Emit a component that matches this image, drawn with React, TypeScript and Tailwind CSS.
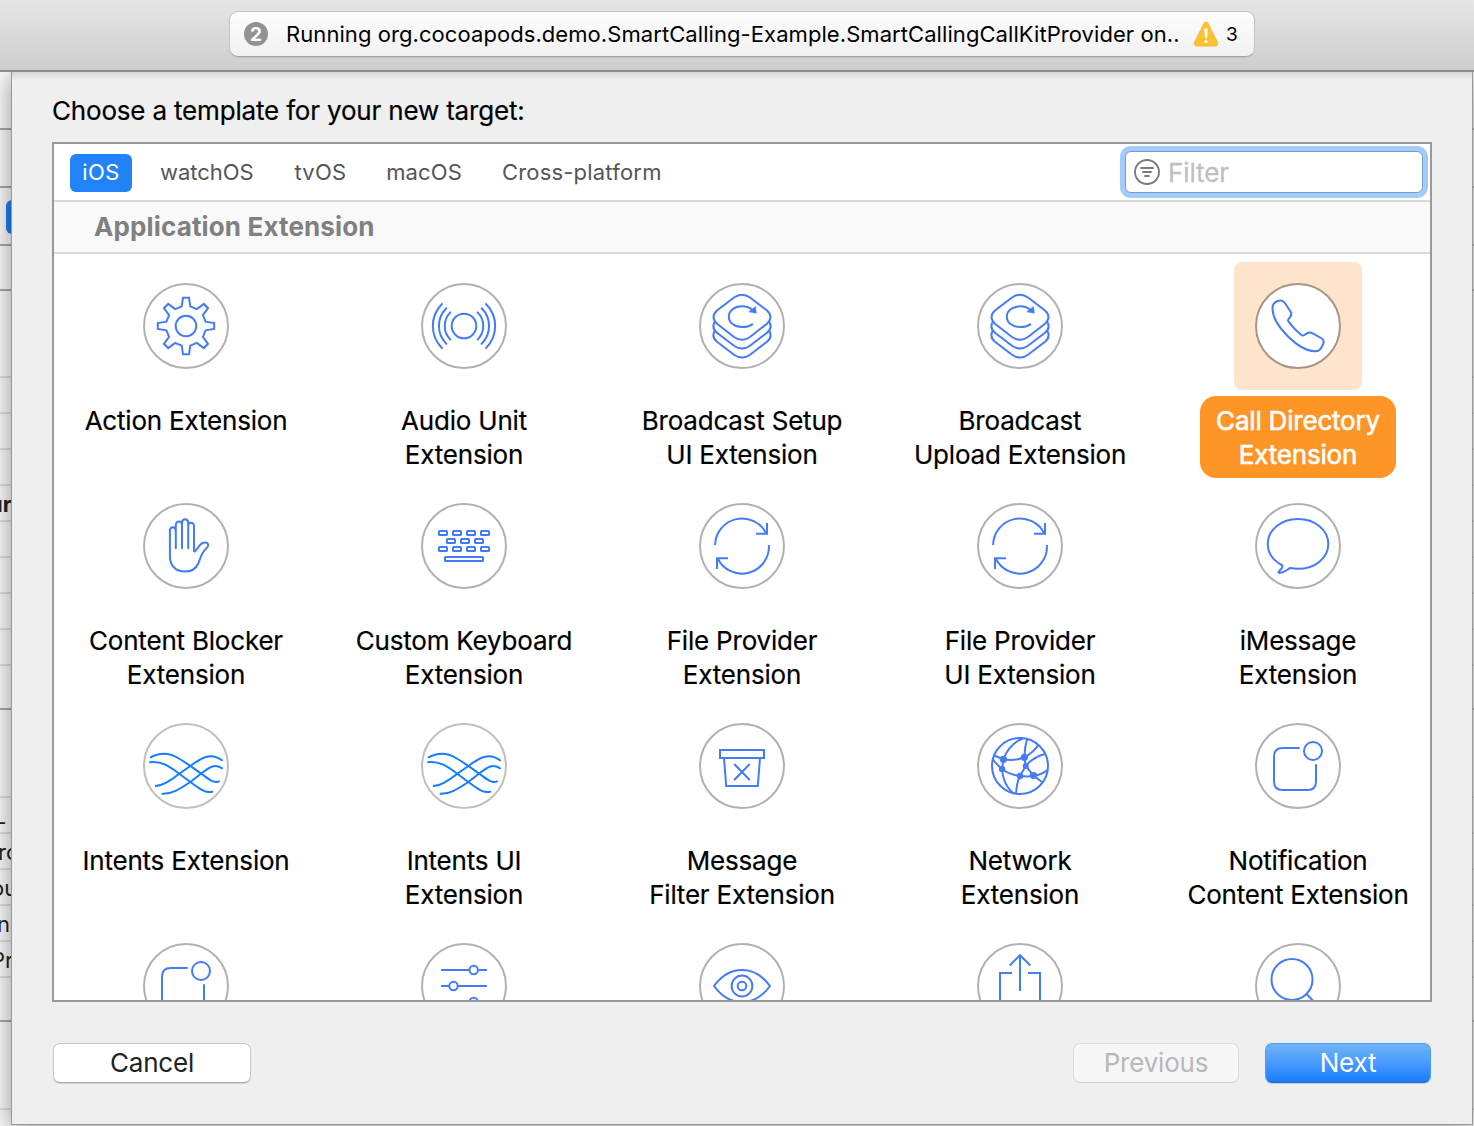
import React from "react";

const BLUE = "#447cf4";

/* ---------- Template icons, drawn around a 0,0 origin ---------- */

const tooth: [number, number][] = [
  [-4.3, -19.6],
  [-3, -28.2],
  [3, -28.2],
  [4.3, -19.6],
];
const gearPoints = Array.from({ length: 8 }, (_, i) => {
  const a = (i * Math.PI) / 4;
  return tooth
    .map(([x, y]) => `${(x * Math.cos(a) - y * Math.sin(a)).toFixed(2)},${(x * Math.sin(a) + y * Math.cos(a)).toFixed(2)}`)
    .join(" ");
}).join(" ");

const Gear = () => (
  <>
    <polygon points={gearPoints} />
    <circle r="10.3" />
  </>
);

const AudioUnit = () => (
  <g strokeLinecap="round">
    <circle r="12.3" />
    <path d="M-22 -22A31 31 0 0 0 -22 22M-17.7 -17.7A25 25 0 0 0 -17.7 17.7M-13.6 -13.6A19.2 19.2 0 0 0 -13.6 13.6" />
    <path d="M22 -22A31 31 0 0 1 22 22M17.7 -17.7A25 25 0 0 1 17.7 17.7M13.6 -13.6A19.2 19.2 0 0 1 13.6 13.6" />
  </g>
);

const Broadcast = () => (
  <>
    <path d="M-8 -28.5Q0 -34.2 8 -28.5L25 -15.5Q32 -9 25 -2.3L8 11Q0 16.6 -8 11L-25 -2.3Q-32 -9 -25 -15.5Z" />
    <path d="M-27 -4.7Q-31 2 -25 6.7L-8 19.8Q0 25.4 8 19.8L25 6.7Q31 2 27 -4.7" />
    <path d="M-27 4.3Q-31 11 -25 15.7L-8 28.8Q0 34.4 8 28.8L25 15.7Q31 11 27 4.3" />
    <path strokeLinecap="round" d="M10.3 -1.700C7.500 .2 4 1 0 1C-7.500 1 -13.200 -3.500 -13.200 -9.300C-13.200 -15.200 -7.500 -19.700 0 -19.700C4 -19.700 7.500 -18.500 10 -16.500" />
    <path d="M13.500 -19.500L14.300 -12.800L6.800 -14.200Z" fill={BLUE} stroke={BLUE} strokeWidth=".6" />
  </>
);

const Phone = () => (
  <path d="M-25.500 -17.500C-25.700 -21.500 -24 -23.500 -20.500 -25C-17 -26.300 -15 -25.800 -13.300 -23.300L-7.500 -14.500C-6.300 -12.500 -6.400 -10.700 -7.700 -9.200L-9.700 -6.700C-10.300 -5.700 -10.200 -5.200 -9.500 -4.300C-6 0.500 -1.500 5 3 8.700C4.300 9.800 5.500 9.900 6.800 8.800C9.300 6.700 11.500 5.800 14.200 7.100L23 12C25.500 13.500 26.300 15.300 25.200 17.800C23 23.300 21 25.500 16.500 25.300C1 24.800 -25.200 0 -25.500 -17.500Z" />
);

const Hand = () => (
  <path
    strokeLinecap="round"
    strokeLinejoin="round"
    d="M-10.200 2.300V-15C-10.200 -20 -16.100 -20 -16.100 -15V9.700C-16.100 20 -10 25.600 -1 25.600C6.500 25.600 10 22.500 12.300 17.500C14.500 11.500 15.300 8.500 18 5C20.500 2 22.600 .5 22.200 -1.200C21.500 -4.300 17 -4 14.500 -1.500C12 1 10.500 4 9 5.300C8.300 5.700 8 5.300 8 4.500V-20C8 -24.600 2.200 -24.200 2.200 -20V2.300M2.200 -18V-23.300C2.200 -28 -4 -28 -4 -23.300V2.300M-4 -20C-4 -26 -10.200 -26 -10.200 -20V-14"
  />
);

const keys: [number, number][] = [
  [-25, -15], [-11, -15], [3, -15], [17, -15],
  [-17, -7], [-3, -7], [11, -7],
  [-25, 1], [-11, 1], [3, 1], [17, 1],
];

const Keyboard = () => (
  <>
    {keys.map(([x, y]) => (
      <rect key={`${x},${y}`} x={x} y={y} width="8" height="4" rx=".6" />
    ))}
    <rect x="-19" y="11" width="38" height="4" rx=".6" />
  </>
);

const Sync = () => (
  <>
    <path d="M-26.900 -1A27 27 0 0 1 24.300 -12.500M25 -23V-12.300H14" />
    <path d="M26.900 -1A27 27 0 0 1 -24.300 12.500M-25 23V12.300H-14" />
  </>
);

const Bubble = () => (
  <path
    strokeLinejoin="round"
    d="M-15.500 19.500C-24 15 -30.200 7.500 -30.200 -2C-30.200 -16 -17 -27 0 -27C17 -27 30.300 -16 30.300 -2C30.300 12 17 22.800 0 22.800C-3 22.800 -5.500 22.500 -8 22C-11 23.500 -13 26.500 -18.500 27C-19.800 27 -19.800 26 -19 25.200C-17 23.300 -15 21 -15.500 19.500Z"
  />
);

const Intents = () => (
  <g stroke="#167dfb">
    <path d="M-36 -8.300C-26 -14 -17 -13.500 -8 -8C0 -3.500 8 2.500 15 7.500C22 12.500 28 18.500 33.700 15" />
    <path d="M-36.700 -3.700C-24 -5.500 -16 1 -6.700 7.700L4.300 16C12 21.500 20 28.500 27 25.300" />
    <path d="M-31 20C-23 20 -14 13.500 -6.700 7.700L4.300 0C14 -7 24 -15 36.700 -5.200" />
    <path d="M-24.300 27.800C-15 28.500 -6 23 4.300 16L15 7.700C23 1.500 29 -3.500 36.700 2.700" />
  </g>
);

const FilterBox = () => (
  <>
    <rect x="-22" y="-16" width="44" height="8" />
    <path d="M-18 -8L-15.800 20H15.800L18 -8" />
    <path strokeLinecap="round" d="M-7.300 -1.500L7.300 13.500M7.300 -1.500L-7.300 13.500" />
  </>
);

const Network = () => (
  <>
    <circle r="28" />
    <path d="M-16.600 -6.700Q-11 -22 2.700 -27.500M4.400 -8.700Q4.500 -18 7 -26.700M4.400 -8.700Q14 -14 18.700 -21.500M4.400 -8.700Q-6 -4.500 -16.600 -6.700L-26 -10.500M-27 -6.500Q-23 -1 -18 3Q-10 9 0 10M-16.600 -6.700L-18 3Q-17 18 -7.400 26.700M4.400 -8.700L5.700 0L0 10Q-3.500 17 -4 27.500M5.700 0Q13 -9 25 -12M5.700 0L13.300 9.300L22.500 16.500M0 10Q18 12 27.500 4" />
    <g fill={BLUE} stroke="none">
      <circle cx="-16.600" cy="-6.700" r="3.600" />
      <circle cx="4.400" cy="-8.700" r="3.600" />
      <circle cx="-18" cy="3" r="3.200" />
      <circle cx="5.700" cy="0" r="3" />
      <circle cx="0" cy="10" r="3.200" />
      <circle cx="13.500" cy="9.500" r="3.600" />
    </g>
  </>
);

const Notification = () => (
  <>
    <path strokeLinecap="round" d="M1 -18H-15.500Q-24 -18 -24 -9.500V15.500Q-24 24 -15.500 24H9.500Q18 24 18 15.500V-1" />
    <circle cx="15" cy="-15" r="9" />
  </>
);

const Sliders = () => (
  <>
    <path d="M-23 -16H5.200M14.200 -16H23M-23 0H-15M-6 0H23M-23 16H5.200M14.200 16H23" />
    <circle cx="9.700" cy="-16" r="4.200" />
    <circle cx="-10.500" cy="0" r="4.200" />
    <circle cx="9.700" cy="16" r="4.200" />
  </>
);

const Eye = () => (
  <>
    <path strokeLinejoin="round" d="M-28 0C-20 -11 -11 -16 0 -16C11 -16 20 -11 28 0C20 11 11 16 0 16C-11 16 -20 11 -28 0Z" />
    <circle r="10.400" />
    <circle r="4.300" />
  </>
);

const Share = () => (
  <path d="M0 5V-30M-10.300 -20.500L0 -30.800L10.300 -20.500M-8 -13H-20V26H20V-13H8" />
);

const Search = () => (
  <>
    <circle cx="-6" cy="-6.500" r="20.500" />
    <path d="M8.500 8L27 27" />
  </>
);

type Template = { label: string[]; Icon: () => React.JSX.Element; selected?: boolean };

const templates: Template[] = [
  { label: ["Action Extension"], Icon: Gear },
  { label: ["Audio Unit", "Extension"], Icon: AudioUnit },
  { label: ["Broadcast Setup", "UI Extension"], Icon: Broadcast },
  { label: ["Broadcast", "Upload Extension"], Icon: Broadcast },
  { label: ["Call Directory", "Extension"], Icon: Phone, selected: true },
  { label: ["Content Blocker", "Extension"], Icon: Hand },
  { label: ["Custom Keyboard", "Extension"], Icon: Keyboard },
  { label: ["File Provider", "Extension"], Icon: Sync },
  { label: ["File Provider", "UI Extension"], Icon: Sync },
  { label: ["iMessage", "Extension"], Icon: Bubble },
  { label: ["Intents Extension"], Icon: Intents },
  { label: ["Intents UI", "Extension"], Icon: Intents },
  { label: ["Message", "Filter Extension"], Icon: FilterBox },
  { label: ["Network", "Extension"], Icon: Network },
  { label: ["Notification", "Content Extension"], Icon: Notification },
  { label: [], Icon: Notification },
  { label: [], Icon: Sliders },
  { label: [], Icon: Eye },
  { label: [], Icon: Share },
  { label: [], Icon: Search },
];

function TemplateItem({ label, Icon, selected }: Template) {
  const ring = selected ? "#a89585" : Icon === Intents ? "#c0c0c0" : "#b1b1b1";
  return (
    <div className="flex h-[220px] flex-col items-center pt-2">
      <div className={`flex size-32 shrink-0 items-center justify-center rounded-lg ${selected ? "bg-[#fee4ca]" : ""}`}>
        <svg width="88" height="88" viewBox="-44 -44 88 88" fill="none" stroke={BLUE} strokeWidth="2">
          <circle r="42" fill="#fff" stroke={ring} />
          <Icon />
        </svg>
      </div>
      {label.length > 0 && (
        <div
          className={`mt-1.5 shrink-0 rounded-[16px] px-4 pt-2 pb-1.5 text-center text-[26px] leading-[34px] tracking-[-0.2px] whitespace-nowrap ${
            selected
              ? "bg-[#fe9527] text-white [-webkit-text-stroke:0.6px_white]"
              : "text-black [-webkit-text-stroke:0.2px_black]"
          }`}
        >
          {label.map((line) => (
            <div key={line}>{line}</div>
          ))}
        </div>
      )}
    </div>
  );
}

/* ---------- Editor rows that peek out beside the sheet ---------- */

type Row = { cls: string; text?: string; textCls?: string };

const rows: Row[] = [
  { cls: "h-[58px] border-[#a6a6a6]" },
  { cls: "h-[58px] border-[#a6a6a6]" },
  { cls: "h-[58px] border-[#a6a6a6]" },
  { cls: "h-[45px] border-[#a6a6a6]" },
  { cls: "h-[87px] border-[#dedede]" },
  { cls: "h-9 border-[#dedede]" },
  { cls: "h-9 border-[#dedede]" },
  { cls: "h-9 border-[#dedede]" },
  { cls: "h-9 border-[#dedede]", text: "ur", textCls: "-ml-[11px] pt-[7px] font-bold" },
  { cls: "h-9 border-[#dedede]" },
  { cls: "h-9 border-[#dedede]" },
  { cls: "h-9 border-[#dedede]" },
  { cls: "h-9 border-[#dedede]" },
  { cls: "h-11 border-[#a6a6a6]" },
  { cls: "h-[88px] border-[#dedede]" },
  { cls: "h-9 border-[#dedede]", text: "–", textCls: "-ml-[6px] pt-[13px]" },
  { cls: "h-9 border-[#dedede]", text: "ro", textCls: "-ml-[2px] pt-[7px]" },
  { cls: "h-9 border-[#dedede]", text: "ou", textCls: "-ml-[9px] pt-[7px]" },
  { cls: "h-9 border-[#dedede]", text: "n’", textCls: "-ml-[3px] pt-[7px]" },
  { cls: "h-9 border-[#dedede]", text: "Pr", textCls: "-ml-[9px] pt-[7px]" },
  { cls: "h-11 border-[#a6a6a6]" },
  { cls: "h-[88px] border-[#dedede]" },
];

function RowStrip({ withText }: { withText?: boolean }) {
  return (
    <div className="flex flex-col">
      {rows.map((r, i) => (
        <div key={i} className={`flex shrink-0 overflow-hidden border-b-2 ${r.cls}`}>
          {withText && i === 2 && <div className="mt-3 ml-1.5 h-[34px] w-8 shrink-0 rounded-md bg-[#1f7ff0]" />}
          {withText && r.text && (
            <span className={`text-[22px] leading-[22px] whitespace-nowrap text-[#222] ${r.textCls}`}>{r.text}</span>
          )}
        </div>
      ))}
    </div>
  );
}

function Toolbar() {
  return (
    <header className="flex h-[72px] shrink-0 items-start justify-center border-b-2 border-[#8c8c8c] bg-gradient-to-b from-[#e6e6e6] to-[#cdcdcd] pt-[11px]">
      <div className="ml-[10px] flex h-[46px] w-[1026px] items-center rounded-[9px] border border-[#c4c4c4] border-b-[#a3a3a3] bg-gradient-to-b from-[#fdfdfd] to-[#f1f1f1] shadow-[0_1px_1px_rgba(0,0,0,0.08)]">
        <span className="ml-[14px] flex size-6 items-center justify-center rounded-full bg-[#929292] text-[19px] leading-none font-bold text-white">
          2
        </span>
        <span className="ml-[18px] w-[895px] text-[22px] tracking-[0.07px] whitespace-nowrap text-black">
          Running org.cocoapods.demo.SmartCalling-Example.SmartCallingCallKitProvider on..
        </span>
        <svg className="ml-3" width="26" height="26" viewBox="0 0 26 26">
          <path d="M11 2.300Q13 -.6 15 2.300L24.600 21.500Q25.500 24.900 22.500 25H3.500Q.5 24.900 1.400 21.500Z" fill="#ffc131" stroke="#f7b32c" strokeWidth=".8" />
          <path d="M11.300 8.500Q11.300 7.200 13 7.200Q14.700 7.200 14.700 8.500L14.100 16.500Q13.900 17.400 13 17.400Q12.100 17.400 11.900 16.500Z" fill="#fff" />
          <circle cx="13" cy="20.500" r="1.600" fill="#fff" />
        </svg>
        <span className="ml-[7px] text-[19px] leading-none text-black">3</span>
      </div>
    </header>
  );
}

const platforms = [
  { name: "watchOS", cls: "ml-7 tracking-[-0.05px]" },
  { name: "tvOS", cls: "ml-[41px] tracking-[0.2px]" },
  { name: "macOS", cls: "ml-[40px] tracking-[0.1px]" },
  { name: "Cross-platform", cls: "ml-[40px] tracking-[0.2px]" },
];

function PlatformBar() {
  return (
    <div className="flex h-[58px] shrink-0 items-center border-b-2 border-[#d9d9d9] bg-white pr-[7px] pl-4 text-[22px] text-[#555]">
      <span className="mt-[2px] flex h-[38px] w-[62px] items-center justify-center rounded-md bg-[#2283f8] pb-[2px] tracking-[0.4px] text-white">
        iOS
      </span>
      {platforms.map((p) => (
        <span key={p.name} className={p.cls}>
          {p.name}
        </span>
      ))}
      <div className="ml-auto flex h-[42px] w-[298px] items-center rounded-md border border-[#7a9cc4] bg-white pl-2 shadow-[0_0_0_5px_#a0cbfb]">
        <svg width="26" height="26" viewBox="0 0 26 26" fill="none" stroke="#7b7b7b" strokeWidth="1.900">
          <circle cx="13" cy="13" r="12" />
          <path strokeLinecap="round" d="M7 9H19M9 13H17M11 17H15" />
        </svg>
        <span className="ml-2 text-[26px] tracking-[-0.1px] text-[#bfbfbf] [-webkit-text-stroke:0.3px_#bfbfbf]">Filter</span>
      </div>
    </div>
  );
}

function Sheet() {
  return (
    <section className="flex h-[1053px] flex-col border-r border-b border-l border-[#999] bg-[#efefef] px-[40px] shadow-[0_4px_24px_rgba(0,0,0,0.42)]">
      <div className="-mx-[40px] h-2 shrink-0 bg-gradient-to-b from-[#d6d6d6] to-[#efefef]" />
      <h1 className="mt-3 h-[50px] shrink-0 text-[26px] leading-[38px] tracking-[-0.18px] text-black [-webkit-text-stroke:0.2px_black]">
        Choose a template for your new target:
      </h1>
      <div className="flex h-[860px] w-[1380px] shrink-0 flex-col overflow-hidden border-2 border-[#999] bg-white">
        <PlatformBar />
        <h2 className="h-[52px] shrink-0 border-b-2 border-[#d9d9d9] bg-[#f9f9f9] pl-10 text-[26px] leading-[50px] font-bold tracking-[0.14px] text-[#808080]">
          Application Extension
        </h2>
        <div className="-ml-[7px] grid w-[1390px] grid-cols-5">
          {templates.map((t, i) => (
            <TemplateItem key={i} {...t} />
          ))}
        </div>
      </div>
      <div className="mt-[41px] flex w-[1379px] shrink-0 items-center pl-px text-[26px] tracking-[-0.2px]">
        <button className="h-10 w-[198px] rounded-[7px] border border-[#c9c9c9] border-b-[#acacac] bg-white leading-[38px] text-[#222] shadow-[0_1px_1px_rgba(0,0,0,0.12)]">
          Cancel
        </button>
        <button className="ml-auto h-10 w-[166px] rounded-[7px] border border-[#dadada] border-b-[#cdcdcd] bg-[#f6f6f6] leading-[38px] text-[#b8b8b8]">
          Previous
        </button>
        <button className="ml-[26px] h-10 w-[166px] rounded-[7px] border border-[#4fa0f5] border-b-[#1170ee] bg-gradient-to-b from-[#6fb5f9] to-[#167dfd] leading-[38px] text-white shadow-[0_1px_1px_rgba(0,0,0,0.15)]">
          Next
        </button>
      </div>
    </section>
  );
}

export default function App() {
  return (
    <div className="flex h-[1126px] w-[1474px] flex-col overflow-hidden bg-white font-['Inter',sans-serif]">
      <Toolbar />
      <main className="grid h-[1054px] grid-cols-[11px_1462px_1px] overflow-hidden bg-[#fafafa]">
        <div className="h-[1054px] w-3 overflow-hidden">
          <RowStrip withText />
        </div>
        <div className="relative">
          <Sheet />
        </div>
        <div className="h-[1054px] overflow-hidden">
          <RowStrip />
        </div>
      </main>
    </div>
  );
}
